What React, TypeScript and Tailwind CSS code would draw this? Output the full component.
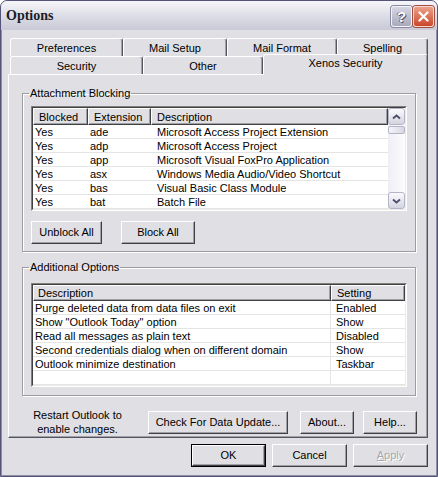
import React from 'react';

const FONT = "font-['Liberation_Sans',Arial,sans-serif]";

// classic 3D raised edge (white top/left, dark bottom/right with inner grey)
const RAISED =
  'border border-t-white border-l-white border-r-[#404040] border-b-[#404040] shadow-[inset_-1px_-1px_0_#a0a0a8]';

type BtnProps = {
  children: React.ReactNode;
  className?: string;
  isDefault?: boolean;
  disabled?: boolean;
};

const Button: React.FC<BtnProps> = ({ children, className = '', isDefault = false, disabled = false }) => {
  const inner = (
    <div
      className={`h-full w-full flex items-center justify-center bg-[#e0dfe3] ${RAISED} ${
        disabled ? 'text-[#a6a6ae] [text-shadow:1px_1px_0_#ffffff]' : 'text-black'
      }`}
    >
      {children}
    </div>
  );
  return <div className={`h-[23px] ${isDefault ? 'border border-black' : ''} ${className}`}>{inner}</div>;
};

const Tab: React.FC<{ label: string; className?: string }> = ({ label, className = '' }) => (
  <div
    className={`flex items-center justify-center rounded-t-[3px] bg-[#e0dfe3] border-t border-l border-r border-t-white border-l-white border-r-[#55555f] shadow-[inset_-1px_0_0_#a0a0a8] ${className}`}
  >
    {label}
  </div>
);

const HeaderCell: React.FC<{ label: string; className?: string }> = ({ label, className = '' }) => (
  <div className={`h-full flex items-center pt-[1px] bg-[#e0dfe3] ${RAISED} ${className}`}>{label}</div>
);

const Chevron: React.FC<{ down?: boolean }> = ({ down }) => (
  <svg width="9" height="6" viewBox="0 0 9 6">
    <polyline
      points={down ? '1,1.5 4.5,4.5 8,1.5' : '1,4.5 4.5,1.5 8,4.5'}
      fill="none"
      stroke="#4d4d6b"
      strokeWidth="1.8"
    />
  </svg>
);

const SCROLL_BTN =
  'h-[17px] w-[17px] rounded-[3px] border border-[#b4b4c8] bg-linear-to-b from-[#fbfbfd] to-[#d4d4e0] flex items-center justify-center';

const attachments = [
  ['Yes', 'ade', 'Microsoft Access Project Extension'],
  ['Yes', 'adp', 'Microsoft Access Project'],
  ['Yes', 'app', 'Microsoft Visual FoxPro Application'],
  ['Yes', 'asx', 'Windows Media Audio/Video Shortcut'],
  ['Yes', 'bas', 'Visual Basic Class Module'],
  ['Yes', 'bat', 'Batch File'],
];

const options = [
  ['Purge deleted data from data files on exit', 'Enabled'],
  ['Show "Outlook Today" option', 'Show'],
  ['Read all messages as plain text', 'Disabled'],
  ['Second credentials dialog when on different domain', 'Show'],
  ['Outlook minimize destination', 'Taskbar'],
  ['', ''],
];

const GROUP = 'w-[394px] border border-[#9d9da1] shadow-[inset_1px_1px_0_#ffffff,1px_1px_0_#ffffff] p-0 m-0';

export default function App() {
  return (
    <div className="w-[438px] h-[477px] bg-white">
      <div
        className={`${FONT} text-[11px] leading-[13px] text-black w-[438px] h-[477px] flex flex-col bg-[#e0dfe3] border border-[#54547a] rounded-t-[7px] overflow-hidden shadow-[inset_0_0_0_1px_#8d8da8]`}
      >
        {/* Title bar */}
        <div className="h-[29px] shrink-0 flex items-start justify-between pl-[5px] pr-[3px] pt-[5px] bg-linear-to-b from-[#f6f6f9] via-[#dedee7] to-[#c9c9d7]">
          <span className="font-['Liberation_Serif',serif] font-bold text-[14px] leading-[20px] text-[#1c1c28]">
            Options
          </span>
          <div className="flex gap-[1px]">
            <div className="w-[21px] h-[21px] rounded-[3px] border border-[#f4f4f8] bg-linear-to-b from-[#d6d6e2] to-[#a9a9bf] flex items-center justify-center shadow-[0_0_0_1px_#8a8aa2]">
              <span className="font-['Liberation_Sans',sans-serif] font-bold text-[15px] leading-[15px] text-white [text-shadow:1px_1px_0_#55556a,-1px_0_0_#6a6a80]">
                ?
              </span>
            </div>
            <div className="w-[21px] h-[21px] rounded-[3px] border border-[#f6d6cc] bg-linear-to-b from-[#eba08a] to-[#c9452a] flex items-center justify-center shadow-[0_0_0_1px_#a0503c]">
              <svg width="11" height="11" viewBox="0 0 11 11">
                <path d="M1.5 1.5 L9.5 9.5 M9.5 1.5 L1.5 9.5" stroke="#ffffff" strokeWidth="2.2" strokeLinecap="round" />
              </svg>
            </div>
          </div>
        </div>

        {/* Body */}
        <div className="pl-[7px] pt-[8px] flex flex-col">
          {/* back row of tabs */}
          <div className="flex h-[18px] ml-[2px]">
            <Tab label="Preferences" className="w-[113px] pt-[2px]" />
            <Tab label="Mail Setup" className="w-[104px] pt-[2px]" />
            <Tab label="Mail Format" className="w-[110px] pt-[2px]" />
            <Tab label="Spelling" className="w-[91px] pt-[2px]" />
          </div>
          {/* front row of tabs */}
          <div className="flex h-[18px] ml-[2px]">
            <Tab label="Security" className="w-[133px] h-[18px] pt-[2px]" />
            <Tab label="Other" className="w-[120px] h-[18px] pt-[2px]" />
            <Tab
              label="Xenos Security"
              className="w-[165px] h-[21px] -mt-[2px] relative z-10 pb-[3px]"
            />
          </div>

          {/* Tab panel */}
          <div className="w-[420px] h-[364px] border border-t-white border-l-white border-r-[#55555f] border-b-[#55555f] shadow-[inset_-1px_-1px_0_#a0a0a8] pl-[13px] pt-[12px] flex flex-col">
            {/* Attachment Blocking */}
            <fieldset className={`${GROUP} h-[165px]`}>
              <legend className="ml-[6px] px-[1px] leading-[13px]">Attachment Blocking</legend>
              <div className="ml-[8px] mt-[6px] w-[376px] h-[105px] border border-t-[#808080] border-l-[#808080] border-r-white border-b-white">
                <div className="h-full flex bg-white border border-t-[#404040] border-l-[#404040] border-r-[#ecece6] border-b-[#ecece6]">
                  <div className="w-[355px] flex flex-col">
                    <div className="h-[17px] flex">
                      <HeaderCell label="Blocked" className="w-[55px] pl-[5px]" />
                      <HeaderCell label="Extension" className="w-[63px] pl-[5px]" />
                      <HeaderCell label="Description" className="flex-1 pl-[5px]" />
                    </div>
                    {attachments.map(([b, e, d]) => (
                      <div key={e} className="h-[14px] flex items-center pt-[2px] border-b border-[#e4e4e4]">
                        <div className="w-[55px] pl-[2px]">{b}</div>
                        <div className="w-[63px] pl-[2px]">{e}</div>
                        <div className="flex-1 pl-[6px] whitespace-nowrap">{d}</div>
                      </div>
                    ))}
                  </div>
                  {/* scrollbar */}
                  <div className="w-[17px] h-full flex flex-col bg-linear-to-r from-[#eeeef4] to-[#fdfdff]">
                    <div className={SCROLL_BTN}>
                      <Chevron />
                    </div>
                    <div className="h-[8px] mt-[1px] rounded-[2px] border border-[#b4b4c8] bg-linear-to-r from-[#f4f4f8] to-[#d8d8e4]" />
                    <div className="flex-1" />
                    <div className={SCROLL_BTN}>
                      <Chevron down />
                    </div>
                  </div>
                </div>
              </div>
              <div className="flex ml-[8px] mt-[10px] gap-[19px]">
                <Button className="w-[71px]">Unblock All</Button>
                <Button className="w-[74px]">Block All</Button>
              </div>
            </fieldset>

            {/* Additional Options */}
            <fieldset className={`${GROUP} h-[135px] mt-[9px]`}>
              <legend className="ml-[6px] px-[1px] leading-[13px]">Additional Options</legend>
              <div className="ml-[8px] mt-[9px] w-[376px] h-[104px] border border-t-[#808080] border-l-[#808080] border-r-white border-b-white">
                <div className="h-full flex flex-col bg-white border border-t-[#404040] border-l-[#404040] border-r-[#ecece6] border-b-[#ecece6]">
                  <div className="h-[16px] flex">
                    <HeaderCell label="Description" className="w-[298px] pl-[4px]" />
                    <HeaderCell label="Setting" className="flex-1 pl-[5px]" />
                  </div>
                  {options.map(([d, s], i) => (
                    <div key={i} className="h-[14px] flex border-b border-[#e4e4e4]">
                      <div className="w-[298px] h-full flex items-center pt-[2px] pl-[2px] border-r border-[#e4e4e4] whitespace-nowrap">
                        {d}
                      </div>
                      <div className="flex-1 h-full flex items-center pt-[2px] pl-[5px]">{s}</div>
                    </div>
                  ))}
                </div>
              </div>
            </fieldset>

            {/* panel footer */}
            <div className="flex items-center mt-[12px]">
              <div className="w-[111px] text-center leading-[14px]">
                Restart Outlook to
                <br />
                enable changes.
              </div>
              <Button className="w-[140px] ml-[15px]">Check For Data Update...</Button>
              <Button className="w-[54px] ml-[12px]">About...</Button>
              <Button className="w-[54px] ml-[9px]">Help...</Button>
            </div>
          </div>

          {/* dialog buttons */}
          <div className="flex justify-end gap-[6px] mt-[6px] pr-[9px]">
            <Button className="w-[75px]" isDefault>
              OK
            </Button>
            <Button className="w-[75px]">Cancel</Button>
            <Button className="w-[75px]" disabled>
              <span>
                <span className="underline">A</span>pply
              </span>
            </Button>
          </div>
        </div>
      </div>
    </div>
  );
}
